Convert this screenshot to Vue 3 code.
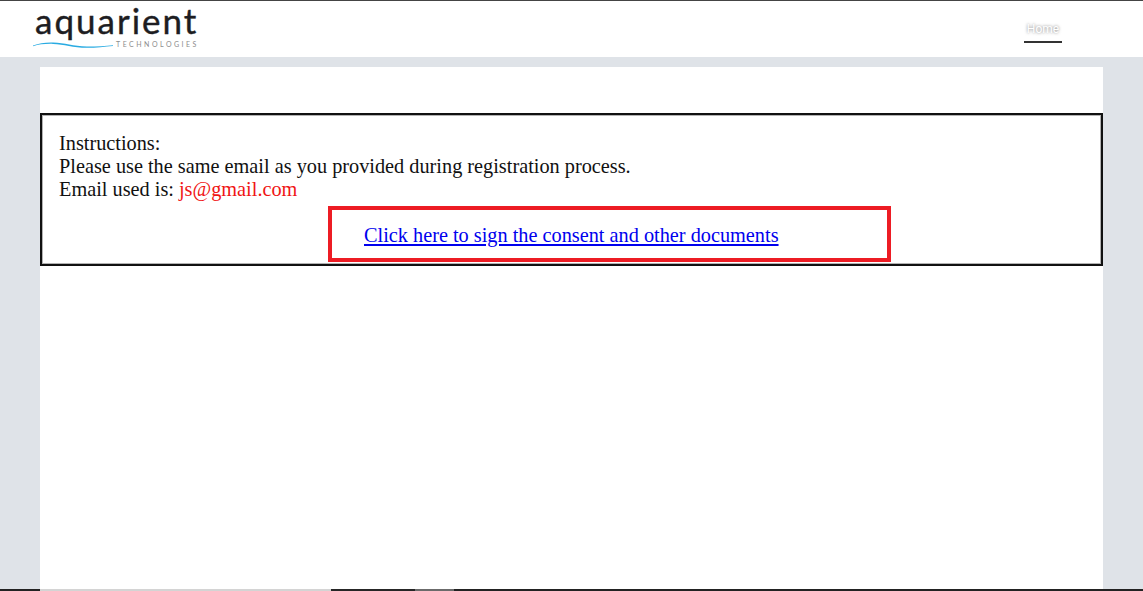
<template>
  <div class="page">
    <header class="topbar">
      <div class="logo">
        <div class="logo-name">aquarient</div>
        <div class="logo-sub">
          <svg class="wave" width="80" height="8" viewBox="0 0 80 8">
            <path d="M0 4.6C6 2.4 12 1.4 20 1.6C32 1.9 40 5.4 54 5.6C63 5.7 72 4.8 80 4.2L80 5C72 5.8 63 6.8 54 6.8C40 6.7 31 3.2 20 2.9C12 2.7 6 3.4 0 5.2Z" fill="#29abe2" />
          </svg>
          <span>TECHNOLOGIES</span>
        </div>
      </div>
      <nav class="nav">
        <a class="nav-item">Home</a>
      </nav>
    </header>
    <main class="content">
      <section class="instructions">
        <div>Instructions:</div>
        <div>Please use the same email as you provided during registration process.</div>
        <div>Email used is: <span class="email">js@gmail.com</span></div>
        <div class="link-box">
          <a href="#" @click.prevent>Click here to sign the consent and other documents</a>
        </div>
      </section>
    </main>
    <div class="bottom-strip">
      <span v-for="s in strip" :key="s.c + s.w" :style="{ width: s.w + 'px', background: s.c }"></span>
    </div>
  </div>
</template>

<script setup>
const strip = [
  { w: 40, c: '#222' },
  { w: 291, c: '#d4d4d4' },
  { w: 84, c: '#262626' },
  { w: 39, c: '#6b6b6b' },
  { w: 689, c: '#222222' },
]
</script>

<style>
html, body {
  margin: 0;
  overflow: hidden;
}
</style>

<style scoped>
.page {
  height: 591px;
  background: #dfe3e8;
  display: flex;
  flex-direction: column;
  font-family: "Liberation Serif", "Times New Roman", serif;
  color: #111;
}
.topbar {
  height: 56px;
  flex: none;
  background: #fff;
  border-top: 1px solid #444;
  display: flex;
  justify-content: space-between;
  padding-left: 33px;
  padding-right: 81px;
}
.logo {
  width: 166px;
  font-family: Lato, "Open Sans", sans-serif;
}
.logo-name {
  font-size: 35px;
  line-height: 36px;
  letter-spacing: 2px;
  color: #1d1d22;
  -webkit-text-stroke: 0.4px #1d1d22;
  margin-top: 1px;
  margin-left: 2px;
}
.logo-sub {
  display: flex;
  align-items: center;
  gap: 3px;
  margin-top: 2px;
  height: 9px;
  font-size: 7px;
  line-height: 9px;
  letter-spacing: 2.5px;
  white-space: nowrap;
  color: #8c8c8c;
}
.nav {
  display: flex;
}
.nav-item {
  width: 38px;
  height: 31px;
  margin-top: 11px;
  box-sizing: border-box;
  padding-top: 10px;
  text-align: center;
  font-family: Roboto, "Liberation Sans", sans-serif;
  font-size: 12px;
  line-height: 14px;
  color: #fff;
  text-shadow: 0 0 3px #777;
  border-bottom: 2px solid #333;
}
.content {
  flex: 1;
  margin: 10px 40px 0;
  background: #fff;
  padding-top: 46px;
}
.instructions {
  border: 2px solid #111;
  box-shadow: inset 0 0 0 1px rgba(0, 0, 0, 0.3);
  box-sizing: border-box;
  height: 153px;
  padding: 17px 0 0 17px;
  font-size: 20.3px;
  line-height: 23px;
}
.email {
  color: #f01414;
}
.link-box {
  box-sizing: border-box;
  width: 563px;
  height: 56px;
  margin: 5px 0 0 269px;
  padding: 14px 0 0 32px;
  border: 4px solid #ed1c24;
}
.link-box a {
  color: #0000ee;
}
.bottom-strip {
  height: 2px;
  flex: none;
  display: flex;
}
.bottom-strip span {
  display: block;
}
</style>
